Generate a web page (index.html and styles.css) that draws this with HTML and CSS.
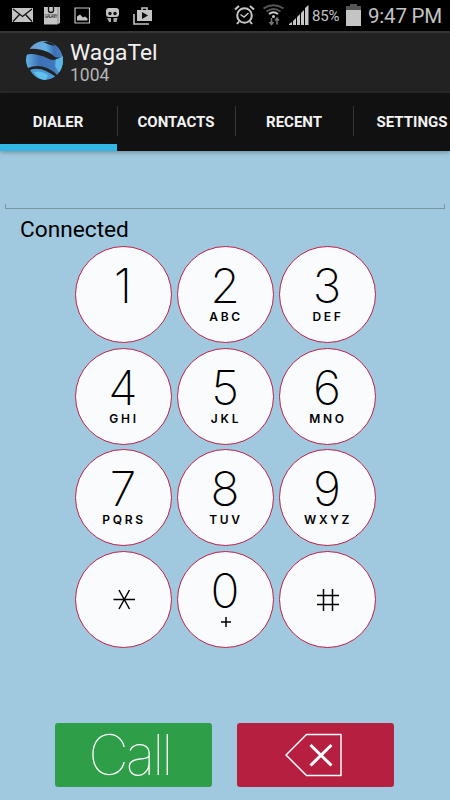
FILE: index.html
```html
<!doctype html>
<html lang="en">
<head>
	<meta charset="UTF-8">
	<meta name="viewport" content="width=device-width, initial-scale=1.0">
	<title>WagaTel</title>
	<link rel="stylesheet" href="styles.css">
</head>
<body>
	<div class="status">
		<svg class="tray" width="160" height="31" viewBox="0 0 160 31">
			<!-- mail -->
			<path fill="#c4c4c4" d="M12 8h21v14H12z"/>
			<path fill="none" stroke="#111" stroke-width="1.3" d="M13 9l9.500 7.500L32 9M13 21.500l6.500-7M32 21.500l-6.500-7"/>
			<!-- galaxy apps -->
			<path fill="#c4c4c4" d="M44 7h16v16l-3 1.500H44z"/>
			<path fill="none" stroke="#111" stroke-width="1.300" d="M48.500 5v5.500q0 2 2.500 2t2.500-2V5"/>
			<path stroke="#888" d="M58 7v17"/>
			<text class="galaxy" x="44.500" y="18" textLength="13">GALAXY</text>
			<!-- gallery -->
			<path fill="none" stroke="#c4c4c4" stroke-width="1.200" d="M75 8h14.500v15H75z"/>
			<path fill="#c4c4c4" d="M77 20.500v-4l3-2 3 3 2-1 2.500 2v2z"/>
			<!-- messenger -->
			<rect x="106" y="8" width="13" height="9" rx="3" fill="#c4c4c4"/>
			<circle cx="110" cy="13.500" r="1.700" fill="#111"/>
			<circle cx="115" cy="13.500" r="1.700" fill="#111"/>
			<path fill="#aaa" d="M107 18h4v4h-2zM113.500 18h4l-1 4h-3z"/>
			<!-- store -->
			<path fill="#c4c4c4" d="M137 10h15v11h-15z"/>
			<path fill="none" stroke="#c4c4c4" stroke-width="1.600" d="M142 10V8h5v2M134 14v10h15"/>
			<path fill="#111" d="M142 12v7l6-3.500z"/>
		</svg>
		<svg class="signal" width="80" height="31" viewBox="232 0 80 31">
			<!-- alarm -->
			<g fill="none" stroke="#c8c8c8" stroke-width="2">
				<circle cx="244.500" cy="15.500" r="7.300"/>
				<path d="M235 9.500l4-3.500M254 9.500L250 6M239 21.500l-2 2.500M250 21.500l2 2.500"/>
				<path stroke-width="1.500" d="M240.500 14.500l3.500 2.500 4.500-4"/>
			</g>
			<!-- wifi -->
			<g fill="none" stroke-width="2">
				<path stroke="#555" d="M263.500 8.500q10-6.500 20 0M266.500 11.500q7-5 14 0"/>
				<path stroke="#c8c8c8" d="M269 14q4.500-3.500 9 0"/>
				<path stroke="#777" stroke-width="1.500" d="M271.500 18v6M269.500 22l2 2.500 2-2.500M277 24.500v-6M275 20.500l2-2.500 2 2.500"/>
			</g>
			<circle cx="273.500" cy="16.500" r="1.500" fill="#c8c8c8"/>
			<!-- bars -->
			<path fill="#c8c8c8" d="M289 25v-1l3-2v3zM293 25v-4l3-3v7zM297 25v-8l3-3v11zM301 25V13l3-3v15zM305 25V8l3.500-3v20z"/>
		</svg>
		<span class="percent">85%</span>
		<svg class="battery" width="15" height="22" viewBox="0 0 15 22">
			<path fill="#c4c4c4" d="M0 6h15v16H0z"/>
			<path fill="#555" d="M0 2h4V0h7v2h4v4H0z"/>
		</svg>
		<span class="clock">9:47 PM</span>
	</div>
	<div class="header">
		<svg class="logo" width="38" height="40" viewBox="0 0 38 40">
			<defs>
				<linearGradient id="band" x1="0" y1="0" x2="1" y2="0">
					<stop offset="0" stop-color="#62b4e4"/>
					<stop offset=".35" stop-color="#3c70b4"/>
					<stop offset=".75" stop-color="#4078bd"/>
					<stop offset="1" stop-color="#5cb8e6"/>
				</linearGradient>
				<linearGradient id="cap" x1="0" y1="0" x2="1" y2="0">
					<stop offset="0" stop-color="#7796d0"/>
					<stop offset=".5" stop-color="#5fb2e2"/>
					<stop offset=".75" stop-color="#3c6fb5"/>
					<stop offset="1" stop-color="#4a80c4"/>
				</linearGradient>
				<clipPath id="round"><ellipse cx="18.500" cy="19.500" rx="18.500" ry="19.500"/></clipPath>
			</defs>
			<g clip-path="url(#round)">
				<path fill="url(#cap)" d="M2 8Q9-1 20 0q12 2 17 14-2 4-8 2-5-5-13-7Q8 7 2 8z"/>
				<path fill="#222" d="M17 1q8-1 12 4-6-1-12-4z"/>
				<path fill="url(#band)" d="M0 14q5-2 12 0 6 1 11 4 7 3 15-4v17q-2 4-5 5-5-6-12-9-10-4-19 0Q-1 22 0 14z"/>
				<path fill="#5ab6e4" d="M30 18q4 0 7-4v14l-3 5-5-8z"/>
				<path fill="#4b9ad6" d="M4 29q8-3 16 1 6 3 10 6l-8 4Q9 39 4 29z"/>
				<path fill="#62c0ec" d="M8 31q7-2 14 3l-2 5q-9-1-12-8z"/>
			</g>
		</svg>
		<div class="title">
			<h1>WagaTel</h1>
			<p>1004</p>
		</div>
	</div>
	<ul class="tabs">
		<li class="active">DIALER</li>
		<li>CONTACTS</li>
		<li>RECENT</li>
		<li>SETTINGS</li>
	</ul>
	<div class="dialer">
		<div class="number"></div>
		<p class="state">Connected</p>
		<div class="keypad">
			<div class="key"><b>1</b></div>
			<div class="key"><b>2</b><span>ABC</span></div>
			<div class="key"><b>3</b><span>DEF</span></div>
			<div class="key"><b>4</b><span>GHI</span></div>
			<div class="key"><b>5</b><span>JKL</span></div>
			<div class="key"><b>6</b><span>MNO</span></div>
			<div class="key"><b>7</b><span>PQRS</span></div>
			<div class="key"><b>8</b><span>TUV</span></div>
			<div class="key"><b>9</b><span>WXYZ</span></div>
			<div class="key">
				<svg width="95" height="95" viewBox="0 0 95 95"><path d="M37.500 47.500h21.500M43 38l10.500 19M53.500 38L43 57"/></svg>
			</div>
			<div class="key">
				<b>0</b>
				<svg class="plus" width="10" height="10" viewBox="0 0 10 10"><path d="M0 5h10M5 0v10"/></svg>
			</div>
			<div class="key">
				<svg width="95" height="95" viewBox="0 0 95 95"><path d="M37 43.500h22M37 52.500h22M43.500 37v22M52.500 37v22"/></svg>
			</div>
		</div>
		<div class="buttons">
			<div class="btn call">Call</div>
			<div class="btn del">
				<svg width="58" height="44" viewBox="0 0 58 44">
					<path stroke-width="1.500" d="M1 22L21.500 1.500H56v41H21.500z"/>
					<path stroke-width="3" d="M25.500 12l21 20.500M46.500 12l-21 20.500"/>
				</svg>
			</div>
		</div>
	</div>
</body>
</html>
```
FILE: styles.css
```css
html, body, div, h1, p, ul, li {
	margin: 0;
	padding: 0;
}
body {
	width: 450px;
	height: 800px;
	overflow: hidden;
	font-family: Roboto, Arial, sans-serif;
	background-color: #a0c9e0;
}
ul {
	list-style: none;
}
svg {
	display: block;
	flex: none;
}
.status {
	display: flex;
	height: 31px;
	background-color: #000;
	color: #c4c4c4;
}
.galaxy {
	font-size: 4.5px;
	fill: #111;
}
.signal {
	margin-left: 72px;
}
.percent {
	width: 34px;
	line-height: 32px;
	font-size: 15px;
	letter-spacing: -0.2px;
}
.battery {
	margin-top: 4px;
}
.clock {
	margin-left: 7px;
	line-height: 32px;
	font-size: 20.5px;
	letter-spacing: -0.2px;
	white-space: nowrap;
}
.header {
	display: flex;
	box-sizing: border-box;
	height: 62px;
	border-top: 2px solid #363636;
	border-bottom: 2px solid #2b2b2b;
	background-color: #222;
}
.logo {
	margin: 8px 0 0 26px;
}
.title {
	margin: 7px 0 0 6px;
}
.title h1 {
	line-height: 26px;
	font-size: 22.8px;
	font-weight: normal;
	color: #f2f2f2;
}
.title p {
	line-height: 19px;
	font-size: 17.5px;
	color: #b5b5b5;
}
.tabs {
	display: flex;
	height: 58px;
	background-color: #111;
	box-shadow: 0 1px 5px rgba(0,0,0,0.35);
}
.tabs li {
	flex: none;
	box-sizing: border-box;
	width: 118px;
	height: 58px;
	line-height: 58px;
	padding-right: 2px;
	text-align: center;
	font-size: 15px;
	font-weight: bold;
	color: #f3f3f3;
	background: linear-gradient(#363636, #363636) right 13px / 1px 30px no-repeat;
}
.tabs li:last-child {
	background: none;
}
.tabs .active {
	background: linear-gradient(#33b5e5, #33b5e5) left bottom / 117px 7px no-repeat, linear-gradient(#363636, #363636) right 13px / 1px 30px no-repeat;
}
.number {
	height: 4px;
	margin: 53px 5px 0;
	border: 1px solid #7697a6;
	border-top: none;
}
.state {
	margin-left: 20px;
	line-height: 42px;
	height: 37px;
	font-size: 22.7px;
	color: #000;
}
.keypad {
	display: grid;
	grid-template-columns: repeat(3, 97px);
	gap: 4.6px 5px;
	margin-left: 75px;
}
.key {
	display: flex;
	flex-direction: column;
	align-items: center;
	box-sizing: border-box;
	width: 97px;
	height: 97px;
	border: 1px solid #bd2048;
	border-radius: 50%;
	background-color: #fafbfd;
	color: #000;
}
.key b {
	margin: 17px 1px 0 0;
	line-height: 44px;
	font-family: Inter, sans-serif;
	font-size: 48px;
	font-weight: 200;
}
.key span {
	line-height: 18px;
	font-family: Inter, sans-serif;
	font-size: 12px;
	font-weight: 600;
	letter-spacing: 2.7px;
	text-indent: 1px;
}
.key svg {
	fill: none;
	stroke: #000;
	stroke-width: 1.5;
}
.key .plus {
	margin-top: 4px;
}
.buttons {
	display: flex;
	gap: 25px;
	margin: 75px 0 0 55.4px;
}
.btn {
	display: flex;
	align-items: center;
	justify-content: center;
	width: 157px;
	height: 64px;
	border-radius: 3px;
}
.call {
	box-sizing: border-box;
	padding-right: 9px;
	font-family: Inter, sans-serif;
	font-size: 56px;
	font-weight: 100;
	letter-spacing: -3px;
	color: #fff;
	background-color: #2e9e49;
}
.del {
	background-color: #b71f40;
}
.del svg {
	margin-right: 3px;
	fill: none;
	stroke: #fff;
	stroke-linejoin: round;
}
```
